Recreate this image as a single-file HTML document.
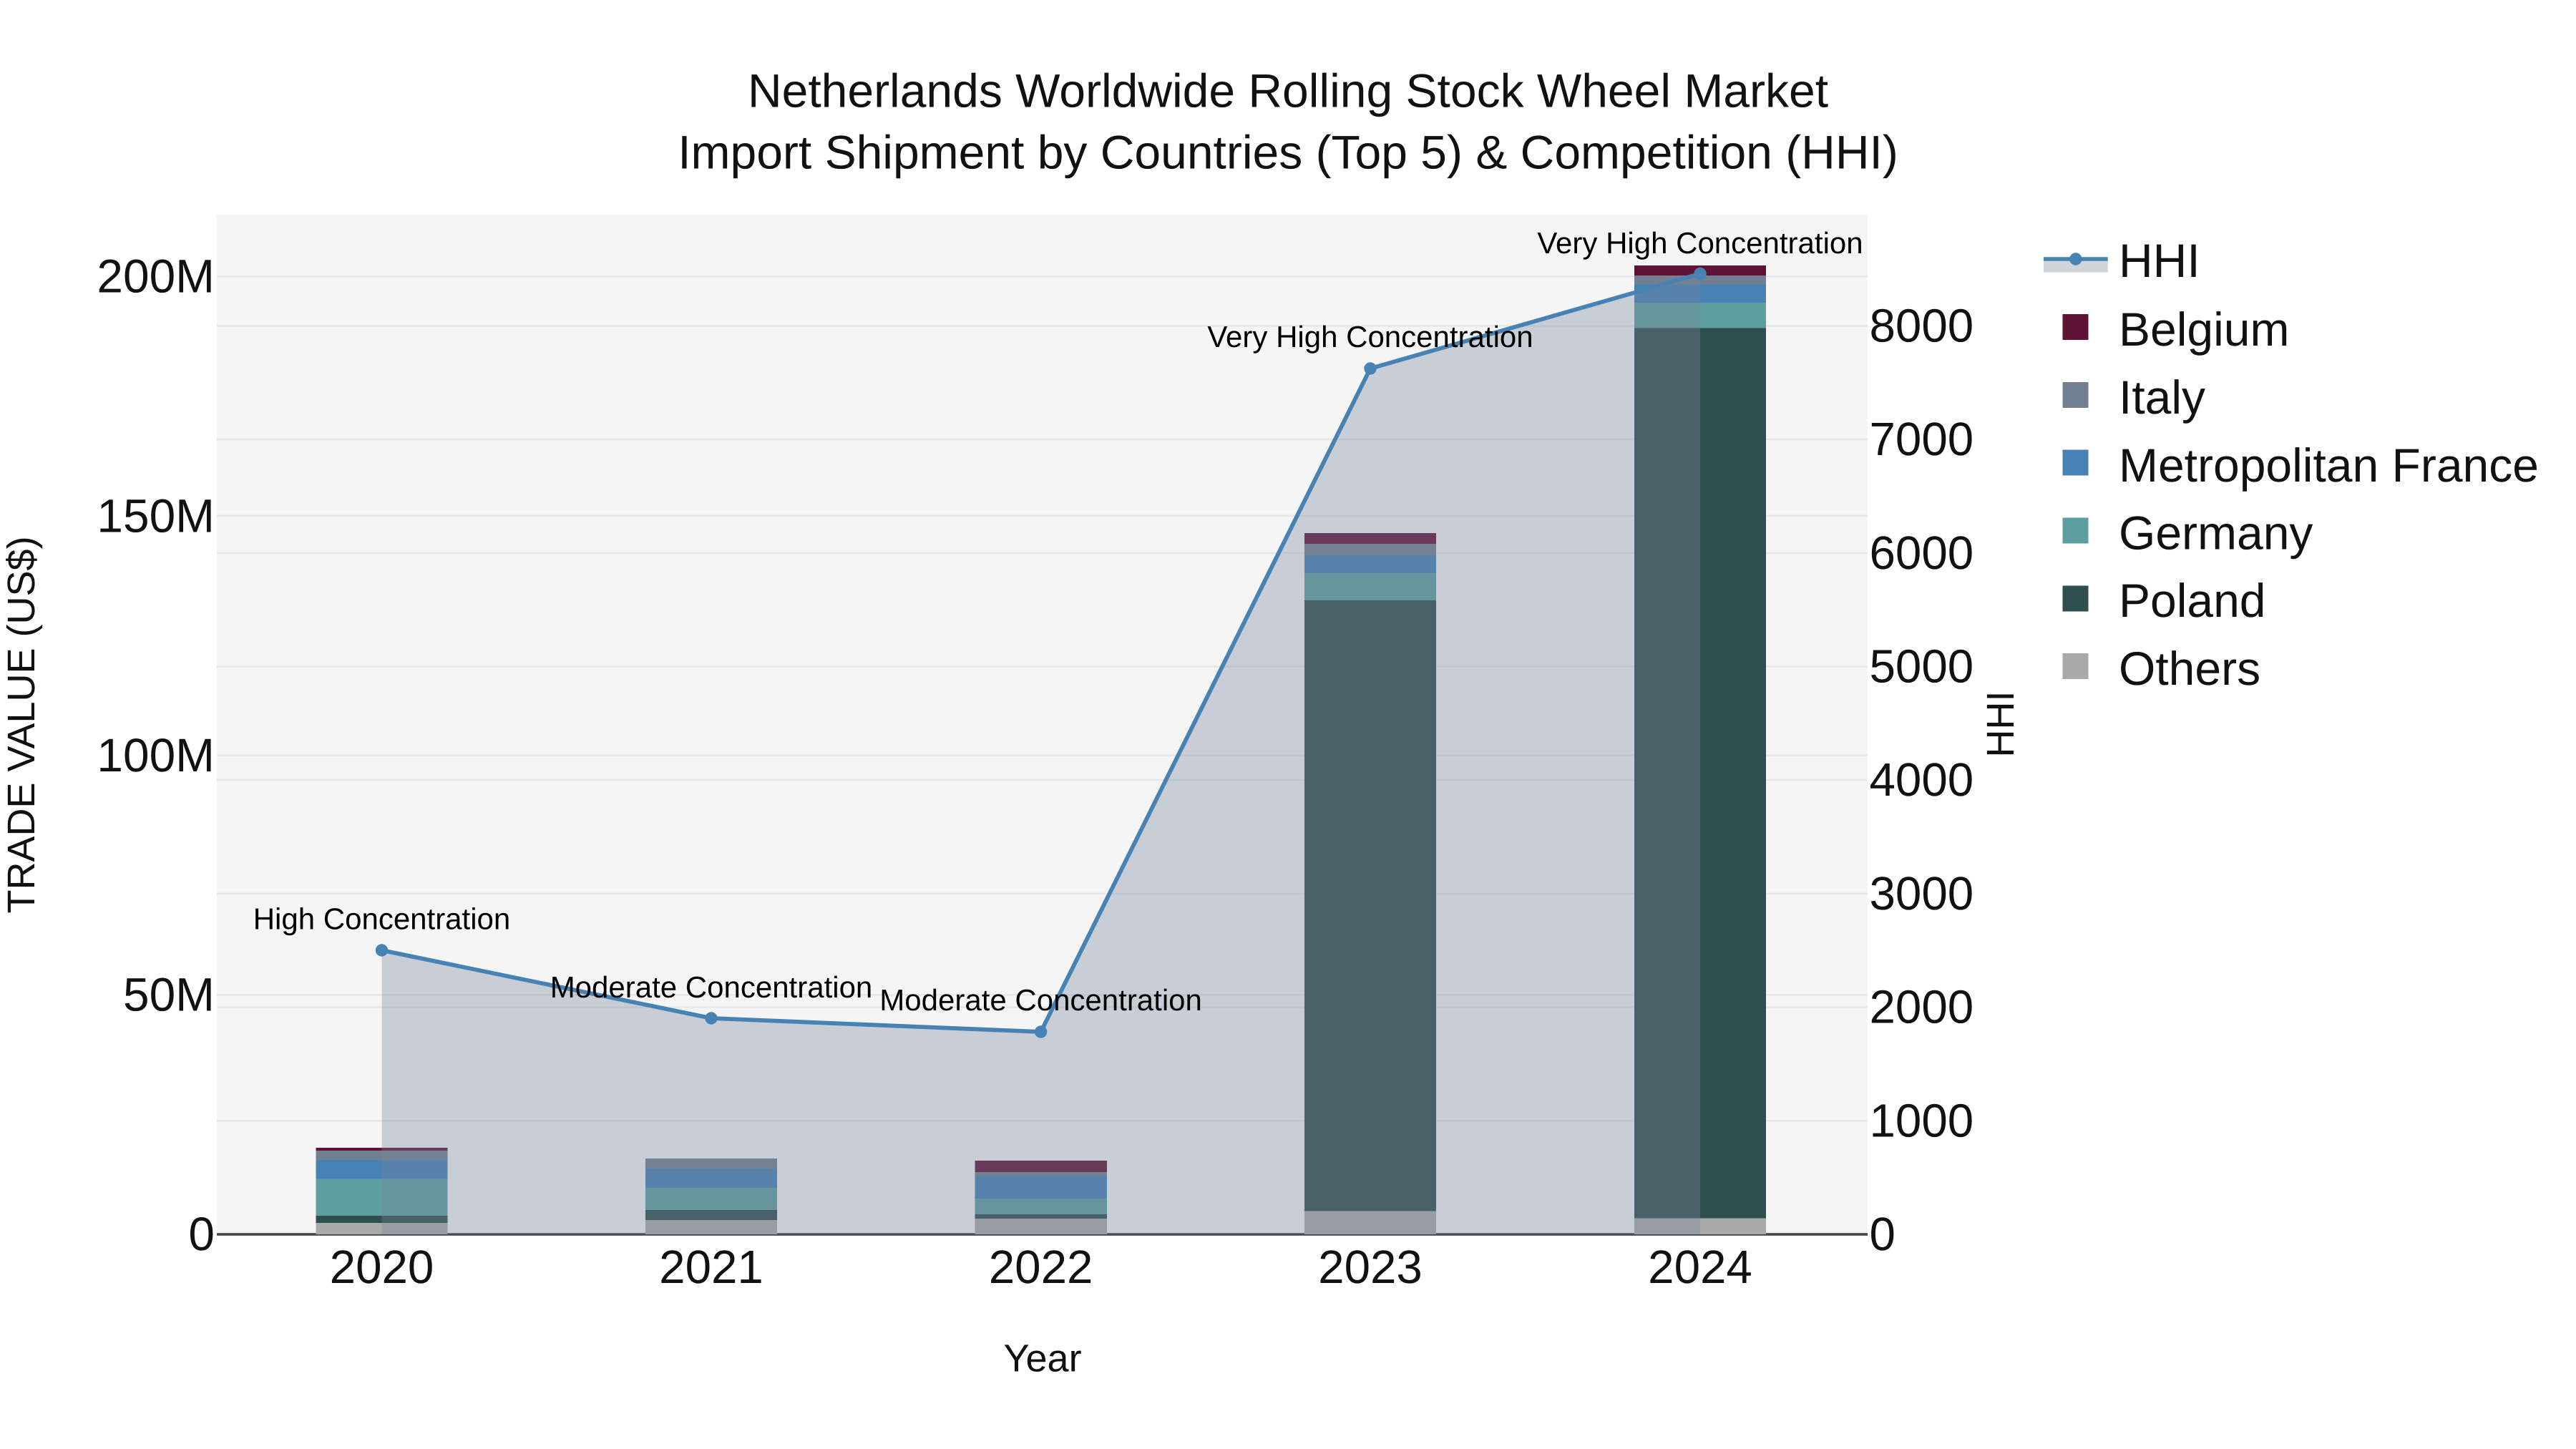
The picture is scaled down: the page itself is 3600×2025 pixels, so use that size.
<!DOCTYPE html>
<html>
<head>
<meta charset="utf-8">
<style>
html,body{margin:0;padding:0;background:#fff;width:3600px;height:2025px;overflow:hidden}
svg{display:block}
text{font-family:"Liberation Sans",sans-serif;text-rendering:geometricPrecision;fill:#111}
.tl{font-size:65.8px;text-anchor:end}
.tr{font-size:65.5px}
.tx{font-size:65.5px;text-anchor:middle}
.an{font-size:42px;text-anchor:middle;fill:#000}
.lg{font-size:66px}
.ax{font-size:54px;text-anchor:middle}
.ti{font-size:66px;text-anchor:middle}
</style>
</head>
<body>
<svg width="3600" height="2025" viewBox="0 0 3600 2025" xmlns="http://www.w3.org/2000/svg">
<rect x="303" y="300" width="2307" height="1425" fill="#f5f5f5"/>
<g stroke="#e6e6e6" stroke-width="2.4">
<line x1="303" x2="2610" y1="386.3" y2="386.3"/>
<line x1="303" x2="2610" y1="721" y2="721"/>
<line x1="303" x2="2610" y1="1055.6" y2="1055.6"/>
<line x1="303" x2="2610" y1="1390.3" y2="1390.3"/>
<line x1="303" x2="2610" y1="455.3" y2="455.3"/>
<line x1="303" x2="2610" y1="614" y2="614"/>
<line x1="303" x2="2610" y1="772.8" y2="772.8"/>
<line x1="303" x2="2610" y1="931.5" y2="931.5"/>
<line x1="303" x2="2610" y1="1090" y2="1090"/>
<line x1="303" x2="2610" y1="1249" y2="1249"/>
<line x1="303" x2="2610" y1="1407.6" y2="1407.6"/>
<line x1="303" x2="2610" y1="1566.3" y2="1566.3"/>
</g>
<rect x="303" y="1723.2" width="2307" height="3.6" fill="#444"/>
<!-- bars -->
<g shape-rendering="crispEdges">
<!-- 2020 -->
<rect x="441.3" y="1604" width="184.2" height="4" fill="#601236"/>
<rect x="441.3" y="1608" width="184.2" height="13" fill="#708090"/>
<rect x="441.3" y="1621" width="184.2" height="26.7" fill="#4682b4"/>
<rect x="441.3" y="1647.7" width="184.2" height="51.3" fill="#5f9ea0"/>
<rect x="441.3" y="1699" width="184.2" height="10" fill="#2f4f4f"/>
<rect x="441.3" y="1709" width="184.2" height="16" fill="#a9a9a9"/>
<!-- 2021 -->
<rect x="902" y="1619" width="184.2" height="14" fill="#708090"/>
<rect x="902" y="1633" width="184.2" height="27" fill="#4682b4"/>
<rect x="902" y="1660" width="184.2" height="31" fill="#5f9ea0"/>
<rect x="902" y="1691" width="184.2" height="14" fill="#2f4f4f"/>
<rect x="902" y="1705" width="184.2" height="20" fill="#a9a9a9"/>
<!-- 2022 -->
<rect x="1362.7" y="1622" width="184.2" height="16" fill="#601236"/>
<rect x="1362.7" y="1638" width="184.2" height="5.3" fill="#708090"/>
<rect x="1362.7" y="1643.3" width="184.2" height="31.7" fill="#4682b4"/>
<rect x="1362.7" y="1675" width="184.2" height="22" fill="#5f9ea0"/>
<rect x="1362.7" y="1697" width="184.2" height="6" fill="#2f4f4f"/>
<rect x="1362.7" y="1703" width="184.2" height="22" fill="#a9a9a9"/>
<!-- 2023 -->
<rect x="1823" y="745" width="184" height="15" fill="#601236"/>
<rect x="1823" y="760" width="184" height="16" fill="#708090"/>
<rect x="1823" y="776" width="184" height="25" fill="#4682b4"/>
<rect x="1823" y="801" width="184" height="38" fill="#5f9ea0"/>
<rect x="1823" y="839" width="184" height="853.7" fill="#2f4f4f"/>
<rect x="1823" y="1692.7" width="184" height="32.3" fill="#a9a9a9"/>
<!-- 2024 -->
<rect x="2284" y="371" width="184" height="14" fill="#601236"/>
<rect x="2284" y="385" width="184" height="12.7" fill="#708090"/>
<rect x="2284" y="397.7" width="184" height="25.3" fill="#4682b4"/>
<rect x="2284" y="423" width="184" height="35.7" fill="#5f9ea0"/>
<rect x="2284" y="458.7" width="184" height="1244" fill="#2f4f4f"/>
<rect x="2284" y="1702.7" width="184" height="22.3" fill="#a9a9a9"/>
</g>
<!-- HHI area + line -->
<polygon points="533.5,1328 994,1423 1454.6,1442 1915,515 2376,382.5 2376,1725 533.5,1725" fill="rgba(120,132,155,0.35)"/>
<polyline points="533.5,1328 994,1423 1454.6,1442 1915,515 2376,382.5" fill="none" stroke="#4682b4" stroke-width="5.8" stroke-linejoin="round"/>
<g fill="#4682b4">
<circle cx="533.5" cy="1328" r="8.7"/>
<circle cx="994" cy="1423" r="8.7"/>
<circle cx="1454.6" cy="1442" r="8.7"/>
<circle cx="1915" cy="515" r="8.7"/>
<circle cx="2376" cy="382.5" r="8.7"/>
</g>
<!-- annotations -->
<text class="an" x="533.5" y="1298.3">High Concentration</text>
<text class="an" x="994" y="1394">Moderate Concentration</text>
<text class="an" x="1454.6" y="1412">Moderate Concentration</text>
<text class="an" x="1915" y="485">Very High Concentration</text>
<text class="an" x="2376" y="354">Very High Concentration</text>
<!-- title -->
<text class="ti" x="1800" y="149.6">Netherlands Worldwide Rolling Stock Wheel Market</text>
<text class="ti" x="1800" y="235.7">Import Shipment by Countries (Top 5) &amp; Competition (HHI)</text>
<!-- left ticks -->
<text class="tl" x="300" y="408.5">200M</text>
<text class="tl" x="300" y="743.3">150M</text>
<text class="tl" x="300" y="1077.8">100M</text>
<text class="tl" x="300" y="1412.4">50M</text>
<text class="tl" x="300" y="1747">0</text>
<!-- right ticks -->
<text class="tr" x="2612.5" y="477.3">8000</text>
<text class="tr" x="2612.5" y="636">7000</text>
<text class="tr" x="2612.5" y="794.8">6000</text>
<text class="tr" x="2612.5" y="953.5">5000</text>
<text class="tr" x="2612.5" y="1112">4000</text>
<text class="tr" x="2612.5" y="1271">3000</text>
<text class="tr" x="2612.5" y="1429.6">2000</text>
<text class="tr" x="2612.5" y="1588.3">1000</text>
<text class="tr" x="2612.5" y="1747">0</text>
<!-- x ticks -->
<text class="tx" x="533.5" y="1793">2020</text>
<text class="tx" x="994" y="1793">2021</text>
<text class="tx" x="1454.6" y="1793">2022</text>
<text class="tx" x="1915" y="1793">2023</text>
<text class="tx" x="2376" y="1793">2024</text>
<!-- axis titles -->
<text class="ax" x="1457" y="1916.7">Year</text>
<text class="ax" transform="translate(48,1013) rotate(-90)" x="0" y="0">TRADE VALUE (US$)</text>
<text class="ax" transform="translate(2814,1012) rotate(-90)" x="0" y="0">HHI</text>
<!-- legend -->
<rect x="2856" y="362" width="89.7" height="18.6" fill="#d0d4db"/>
<line x1="2856" x2="2945.7" y1="362" y2="362" stroke="#4682b4" stroke-width="5.4"/>
<circle cx="2900.8" cy="362" r="8.7" fill="#4682b4"/>
<g shape-rendering="crispEdges">
<rect x="2882.5" y="439" width="36" height="36" fill="#601236"/>
<rect x="2882.5" y="534" width="36" height="36" fill="#708090"/>
<rect x="2882.5" y="628.7" width="36" height="36" fill="#4682b4"/>
<rect x="2882.5" y="723.5" width="36" height="36" fill="#5f9ea0"/>
<rect x="2882.5" y="818.3" width="36" height="36" fill="#2f4f4f"/>
<rect x="2882.5" y="913" width="36" height="36" fill="#a9a9a9"/>
</g>
<text class="lg" x="2961" y="387">HHI</text>
<text class="lg" x="2961" y="483">Belgium</text>
<text class="lg" x="2961" y="578">Italy</text>
<text class="lg" x="2961" y="673">Metropolitan France</text>
<text class="lg" x="2961" y="767.5">Germany</text>
<text class="lg" x="2961" y="862">Poland</text>
<text class="lg" x="2961" y="957">Others</text>
</svg>
</body>
</html>
